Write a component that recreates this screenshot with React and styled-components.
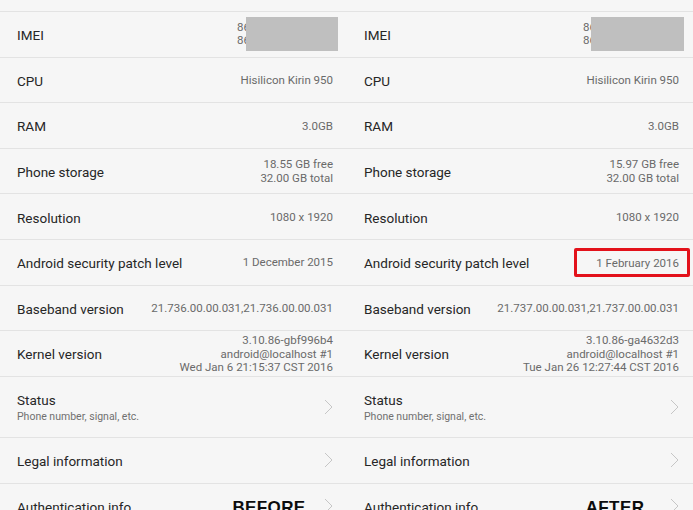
import React from 'react';
import styled, { createGlobalStyle } from 'styled-components';

const Global = createGlobalStyle`
  html, body { margin: 0; padding: 0; background: #f6f6f6; }
  body {
    width: 693px;
    height: 510px;
    overflow: hidden;
    font-family: Roboto, "Noto Sans", "Liberation Sans", sans-serif;
  }
`;

const Screen = styled.div`
  display: grid;
  grid-template-columns: 347px 346px;
  height: 510px;
  overflow: hidden;
  background: #f6f6f6;
`;

const Column = styled.div`
  display: flex;
  flex-direction: column;
  min-width: 0;
`;

const TopStub = styled.div`
  flex: none;
  height: 12px;
  box-sizing: border-box;
  border-bottom: 1px solid #e3e3e3;
`;

const Row = styled.div`
  flex: none;
  box-sizing: border-box;
  height: ${p => (p.$tall ? '61px' : p.$link ? '46px' : '45.6px')};
  border-bottom: 1px solid #e3e3e3;
  display: flex;
  align-items: center;
  padding: 0 14px 0 17px;
  gap: 8px;
`;

const LabelBox = styled.div`
  flex: 1;
  min-width: 0;
  display: flex;
  flex-direction: column;
  gap: 2px;
  padding-top: 2px;
`;

const Label = styled.div`
  font-size: 13.5px;
  color: #262626;
  white-space: nowrap;
`;

const Sub = styled.div`
  font-size: 10.5px;
  color: #707070;
  white-space: nowrap;
`;

const Value = styled.div`
  font-size: 11.5px;
  line-height: 13.6px;
  color: #6a6a6a;
  text-align: right;
  white-space: nowrap;
  padding-top: 2px;
`;

const Masked = styled.div`
  position: relative;
  width: 101px;
  height: 34px;
  margin-right: -5px;
  display: flex;
  flex-direction: column;
  justify-content: center;
  font-size: 11.5px;
  line-height: 13.5px;
  color: #6a6a6a;
`;

const MaskBox = styled.div`
  position: absolute;
  top: 0;
  bottom: 0;
  left: ${p => p.$left}px;
  right: 0;
  background: #bfbfbf;
`;

const Highlight = styled.div`
  box-sizing: border-box;
  width: 116px;
  height: 29px;
  margin-right: -11px;
  border: 3px solid #e3121b;
  border-radius: 2px;
  display: flex;
  align-items: center;
  justify-content: flex-end;
  padding: 2px 8px 0 0;
  font-size: 11.5px;
  color: #6a6a6a;
  white-space: nowrap;
`;

const Annotation = styled.div`
  width: 100px;
  margin-right: -3px;
  text-align: center;
  font-family: "Liberation Sans", Arial, sans-serif;
  font-weight: 700;
  font-size: 17px;
  letter-spacing: 0.4px;
  color: #0c0c0c;
  padding-top: 3px;
`;

const Chevron = () => (
  <svg width="9" height="16" viewBox="0 0 9 16" style={{ flex: 'none' }}>
    <polyline points="1,1 8,8 1,15" fill="none" stroke="#c6c6c6" strokeWidth="1" />
  </svg>
);

const columns = [
  {
    imei: 9,
    storage: ['18.55 GB free', '32.00 GB total'],
    patch: '1 December 2015',
    highlight: false,
    baseband: '21.736.00.00.031,21.736.00.00.031',
    kernel: ['3.10.86-gbf996b4', 'android@localhost #1', 'Wed Jan 6 21:15:37 CST 2016'],
    tag: 'BEFORE',
  },
  {
    imei: 8,
    storage: ['15.97 GB free', '32.00 GB total'],
    patch: '1 February 2016',
    highlight: true,
    baseband: '21.737.00.00.031,21.737.00.00.031',
    kernel: ['3.10.86-ga4632d3', 'android@localhost #1', 'Tue Jan 26 12:27:44 CST 2016'],
    tag: 'AFTER',
  },
];

const Lines = ({ lines }) => (
  <Value>
    {lines.map(l => (
      <div key={l}>{l}</div>
    ))}
  </Value>
);

const Panel = ({ d }) => (
  <Column>
    <TopStub />
    <Row>
      <LabelBox><Label>IMEI</Label></LabelBox>
      <Masked>
        <div>86</div>
        <div>86</div>
        <MaskBox $left={d.imei} />
      </Masked>
    </Row>
    <Row>
      <LabelBox><Label>CPU</Label></LabelBox>
      <Value>Hisilicon Kirin 950</Value>
    </Row>
    <Row>
      <LabelBox><Label>RAM</Label></LabelBox>
      <Value>3.0GB</Value>
    </Row>
    <Row>
      <LabelBox><Label>Phone storage</Label></LabelBox>
      <Lines lines={d.storage} />
    </Row>
    <Row>
      <LabelBox><Label>Resolution</Label></LabelBox>
      <Value>1080 x 1920</Value>
    </Row>
    <Row>
      <LabelBox><Label>Android security patch level</Label></LabelBox>
      {d.highlight ? <Highlight>{d.patch}</Highlight> : <Value>{d.patch}</Value>}
    </Row>
    <Row>
      <LabelBox><Label>Baseband version</Label></LabelBox>
      <Value>{d.baseband}</Value>
    </Row>
    <Row>
      <LabelBox><Label>Kernel version</Label></LabelBox>
      <Lines lines={d.kernel} />
    </Row>
    <Row $tall>
      <LabelBox>
        <Label>Status</Label>
        <Sub>Phone number, signal, etc.</Sub>
      </LabelBox>
      <Chevron />
    </Row>
    <Row $link>
      <LabelBox><Label>Legal information</Label></LabelBox>
      <Chevron />
    </Row>
    <Row $link>
      <LabelBox><Label>Authentication info</Label></LabelBox>
      <Annotation>{d.tag}</Annotation>
      <Chevron />
    </Row>
  </Column>
);

export default function App() {
  return (
    <>
      <Global />
      <Screen>
        {columns.map(d => (
          <Panel key={d.tag} d={d} />
        ))}
      </Screen>
    </>
  );
}
